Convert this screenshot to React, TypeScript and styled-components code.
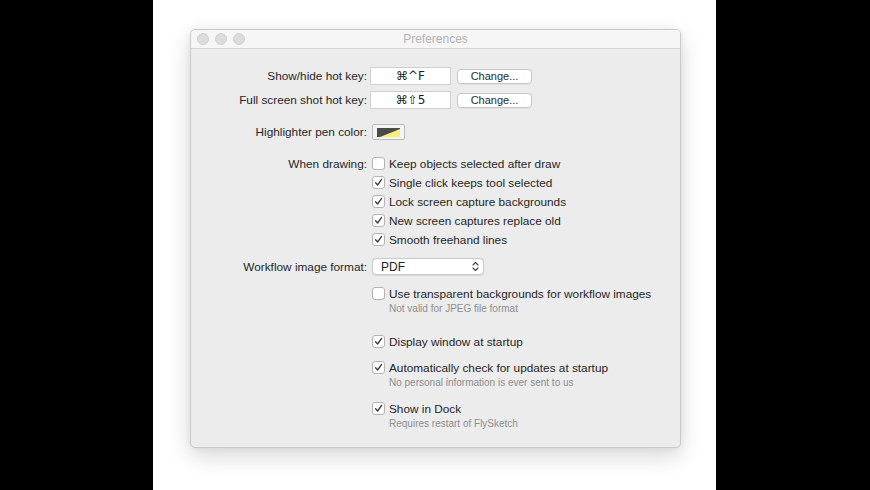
import React from "react";
import styled, { createGlobalStyle } from "styled-components";

const GlobalStyle = createGlobalStyle`
  html, body {
    margin: 0;
    padding: 0;
    background: #000;
  }
  body {
    font-family: "Liberation Sans", "DejaVu Sans", Arial, sans-serif;
    -webkit-font-smoothing: antialiased;
  }
`;

const Stage = styled.div`
  width: 563px;
  height: 490px;
  margin-left: 153px;
  background: #fff;
  padding: 29px 0 0 37px;
  box-sizing: border-box;
`;

const Window = styled.div`
  width: 491px;
  height: 419px;
  box-sizing: border-box;
  border: 1px solid #c9c9c9;
  border-radius: 5px;
  background: #ececec;
  box-shadow: 0 8px 22px rgba(0, 0, 0, 0.16), 0 0 6px rgba(0, 0, 0, 0.06);
  display: flex;
  flex-direction: column;
  overflow: hidden;
`;

const TitleBar = styled.div`
  height: 18px;
  flex: none;
  background: #f6f6f6;
  border-bottom: 1px solid #d6d6d6;
  display: flex;
  align-items: center;
  position: relative;
  padding-left: 6px;
  gap: 6px;
`;

const Light = styled.span`
  width: 12px;
  height: 12px;
  border-radius: 50%;
  background: #dcdcdc;
  border: 1px solid #d0d0d0;
  box-sizing: border-box;
`;

const Title = styled.div`
  position: absolute;
  left: 0;
  right: 0;
  top: 0;
  bottom: 0;
  display: flex;
  align-items: center;
  justify-content: center;
  font-size: 12px;
  color: #b5b5b5;
  pointer-events: none;
`;

const Content = styled.div`
  padding-top: 18px;
  display: flex;
  flex-direction: column;
`;

const Row = styled.div<{ $mt?: number; $h?: number }>`
  display: grid;
  grid-template-columns: 176px 1fr;
  column-gap: 5px;
  align-items: center;
  margin-top: ${(p) => p.$mt ?? 0}px;
  height: ${(p) => p.$h ?? 19}px;
`;

const Label = styled.div`
  text-align: right;
  font-size: 11.8px;
  color: #262626;
  white-space: nowrap;
`;

const Controls = styled.div<{ $gap?: number }>`
  display: flex;
  align-items: center;
  gap: ${(p) => p.$gap ?? 6}px;
`;

const KeyField = styled.div`
  width: 81px;
  height: 18px;
  margin-left: -2px;
  box-sizing: border-box;
  background: #fff;
  border: 1px solid #cfcfcf;
  display: flex;
  align-items: center;
  justify-content: center;
  font-size: 12px;
  color: #222;
  font-family: "DejaVu Sans", "Liberation Sans", sans-serif;
`;

const Button = styled.div`
  width: 75px;
  height: 15px;
  box-sizing: border-box;
  background: #fff;
  border: 1px solid #c8c8c8;
  border-radius: 4px;
  box-shadow: 0 0.5px 0.5px rgba(0, 0, 0, 0.08);
  display: flex;
  align-items: center;
  justify-content: center;
  font-size: 11px;
  color: #2a2a2a;
`;

const Swatch = styled.div`
  width: 33px;
  height: 16px;
  box-sizing: border-box;
  background: #f4f4f4;
  border: 1px solid #bdbdbd;
  border-radius: 2px;
  display: flex;
  align-items: center;
  justify-content: center;
`;

const CheckRow = styled.label`
  display: flex;
  align-items: center;
  gap: 4px;
  font-size: 11.8px;
  color: #262626;
  white-space: nowrap;
`;

const Box = styled.span`
  width: 13px;
  height: 13px;
  box-sizing: border-box;
  background: #fff;
  border: 1px solid #b4b4b4;
  border-radius: 3px;
  display: flex;
  align-items: center;
  justify-content: center;
  flex: none;
`;

const Note = styled.div<{ $mt?: number }>`
  margin-left: 198px;
  margin-top: ${(p) => p.$mt ?? 0}px;
  height: 14px;
  line-height: 12px;
  font-size: 10px;
  color: #8e8e8e;
  white-space: nowrap;
`;

const Popup = styled.div`
  width: 112px;
  height: 17px;
  box-sizing: border-box;
  background: #fff;
  border: 1px solid #cbcbcb;
  border-radius: 4px;
  box-shadow: 0 0.5px 1px rgba(0, 0, 0, 0.1);
  display: flex;
  align-items: center;
  justify-content: space-between;
  padding: 0 4px 0 8px;
  font-size: 12px;
  color: #222;
`;

const Check = ({ on, text }: { on?: boolean; text: string }) => (
  <CheckRow>
    <Box>
      {on && (
        <svg width="9" height="9" viewBox="0 0 9 9">
          <path
            d="M1.6 4.8 L3.6 7 L7.6 1.4"
            fill="none"
            stroke="#3a3a3a"
            strokeWidth="1.3"
            strokeLinecap="round"
            strokeLinejoin="round"
          />
        </svg>
      )}
    </Box>
    {text}
  </CheckRow>
);

export default function App() {
  return (
    <>
      <GlobalStyle />
      <Stage>
        <Window>
          <TitleBar>
            <Light />
            <Light />
            <Light />
            <Title>Preferences</Title>
          </TitleBar>
          <Content>
            <Row $h={18}>
              <Label>Show/hide hot key:</Label>
              <Controls>
                <KeyField>⌘^F</KeyField>
                <Button>Change...</Button>
              </Controls>
            </Row>
            <Row $h={18} $mt={6}>
              <Label>Full screen shot hot key:</Label>
              <Controls>
                <KeyField>⌘⇧5</KeyField>
                <Button>Change...</Button>
              </Controls>
            </Row>
            <Row $h={16} $mt={15}>
              <Label>Highlighter pen color:</Label>
              <Controls>
                <Swatch>
                  <svg width="23" height="9" viewBox="0 0 23 9">
                    <rect x="0" y="0" width="23" height="9" fill="#4a4a4a" />
                    <polygon points="3,9 23,1 23,9" fill="#f5f07a" />
                  </svg>
                </Swatch>
              </Controls>
            </Row>
            <Row $mt={14}>
              <Label>When drawing:</Label>
              <Check text="Keep objects selected after draw" />
            </Row>
            <Row>
              <span />
              <Check on text="Single click keeps tool selected" />
            </Row>
            <Row>
              <span />
              <Check on text="Lock screen capture backgrounds" />
            </Row>
            <Row>
              <span />
              <Check on text="New screen captures replace old" />
            </Row>
            <Row>
              <span />
              <Check on text="Smooth freehand lines" />
            </Row>
            <Row $h={17} $mt={9}>
              <Label>Workflow image format:</Label>
              <Controls>
                <Popup>
                  PDF
                  <svg width="7" height="11" viewBox="0 0 7 11">
                    <path
                      d="M1 4 L3.5 1.5 L6 4 M1 7 L3.5 9.5 L6 7"
                      fill="none"
                      stroke="#444"
                      strokeWidth="1.1"
                      strokeLinecap="round"
                      strokeLinejoin="round"
                    />
                  </svg>
                </Popup>
              </Controls>
            </Row>
            <Row $mt={9}>
              <span />
              <Check text="Use transparent backgrounds for workflow images" />
            </Row>
            <Note>Not valid for JPEG file format</Note>
            <Row $mt={15}>
              <span />
              <Check on text="Display window at startup" />
            </Row>
            <Row $mt={7}>
              <span />
              <Check on text="Automatically check for updates at startup" />
            </Row>
            <Note>No personal information is ever sent to us</Note>
            <Row $mt={8}>
              <span />
              <Check on text="Show in Dock" />
            </Row>
            <Note>Requires restart of FlySketch</Note>
          </Content>
        </Window>
      </Stage>
    </>
  );
}
